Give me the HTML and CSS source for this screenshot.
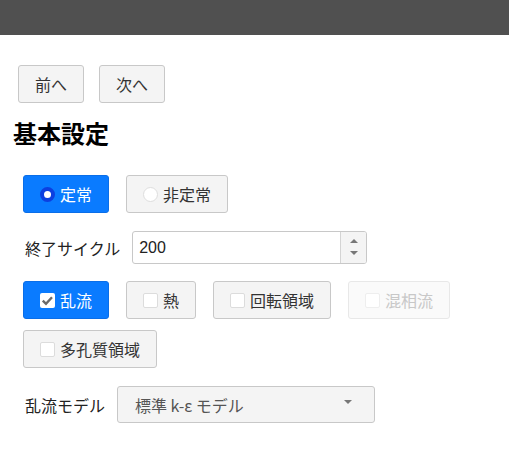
FILE: index.html
```html
<!DOCTYPE html>
<html lang="ja">
<head>
<meta charset="utf-8">
<title>基本設定</title>
<link rel="stylesheet" href="styles.css">
</head>
<body>
<div class="topbar"></div>
<main class="page">
  <div class="nav">
    <button class="btn">前へ</button>
    <button class="btn">次へ</button>
  </div>
  <h2 class="title">基本設定</h2>
  <div class="options radio-row">
    <label class="opt active"><span class="radio on"></span>定常</label>
    <label class="opt"><span class="radio"></span>非定常</label>
  </div>
  <div class="field cycle-row">
    <span class="field-label">終了サイクル</span>
    <div class="number">
      <span class="number-value">200</span>
      <span class="spinner"><span class="arrow-up"></span><span class="arrow-down"></span></span>
    </div>
  </div>
  <div class="options check-row">
    <label class="opt active"><span class="check on"><svg viewBox="0 0 15 15" width="15" height="15"><path d="M2.8 7.6 L6 10.8 L12 4.2" fill="none" stroke="#6a6a6a" stroke-width="2.4"/></svg></span>乱流</label>
    <label class="opt"><span class="check"></span>熱</label>
    <label class="opt"><span class="check"></span>回転領域</label>
    <label class="opt disabled"><span class="check"></span>混相流</label>
    <label class="opt"><span class="check"></span>多孔質領域</label>
  </div>
  <div class="field model-row">
    <span class="field-label">乱流モデル</span>
    <div class="select">標準 k-ε モデル<span class="caret"></span></div>
  </div>
</main>
</body>
</html>
```
FILE: styles.css
```css
* { box-sizing: border-box; }
body {
  margin: 0;
  font-family: "Noto Sans CJK JP", "Liberation Sans", sans-serif;
  color: #222;
  background: #fff;
}
.topbar {
  height: 35px;
  background: #505050;
}
.page {
  padding-left: 13px;
}
.nav {
  display: flex;
  gap: 15px;
  margin: 30px 0 0 5px;
}
.btn {
  height: 38px;
  width: 66px;
  padding: 0;
  border: 1px solid #c8c8c8;
  border-radius: 3px;
  background: #f4f4f4;
  color: #333;
  font-family: inherit;
  font-size: 16px;
}
.title {
  margin: 15px 0 0;
  font-size: 24px;
  line-height: 30px;
  font-weight: bold;
  color: #000;
}
.options {
  display: flex;
  flex-wrap: wrap;
  column-gap: 17px;
  row-gap: 11px;
  margin-left: 10px;
}
.radio-row { margin-top: 27px; }
.check-row { margin-top: 17px; }
.opt {
  height: 38px;
  display: flex;
  align-items: center;
  gap: 5px;
  padding: 0 16px;
  border: 1px solid #c8c8c8;
  border-radius: 3px;
  background: #f4f4f4;
  color: #333;
  font-size: 16px;
}
.opt.active {
  background: #0a7bff;
  border-color: #0a6ee8;
  color: #fff;
}
.opt.disabled {
  background: #fafafa;
  border-color: #e8e8e8;
  color: #c8c8c8;
}
.radio {
  width: 15px;
  height: 15px;
  border-radius: 50%;
  background: #fff;
  border: 1px solid #dedede;
  flex: none;
}
.radio.on {
  border: 4px solid #0c3fe0;
}
.check {
  width: 15px;
  height: 15px;
  background: #fff;
  border: 1px solid #dcdcdc;
  border-radius: 2px;
  flex: none;
  display: flex;
}
.check.on { border: none; }
.opt.disabled .check { border-color: #eeeeee; }
.field {
  display: flex;
  align-items: center;
  gap: 12px;
  margin-left: 12px;
}
.field-label {
  font-size: 16px;
  color: #222;
}
.cycle-row { margin-top: 18px; }
.number {
  width: 235px;
  height: 33px;
  display: flex;
  border: 1px solid #c8c8c8;
  border-radius: 3px;
  overflow: hidden;
}
.number-value {
  flex: 1;
  padding-left: 6px;
  display: flex;
  align-items: center;
  font-family: "Liberation Sans", sans-serif;
  font-size: 16px;
  color: #222;
}
.spinner {
  width: 26px;
  border-left: 1px solid #d4d4d4;
  background: #f4f4f4;
  display: flex;
  flex-direction: column;
  align-items: center;
  justify-content: space-around;
  padding: 3px 0 4px;
}
.arrow-up, .arrow-down {
  width: 0;
  height: 0;
  border-left: 4px solid transparent;
  border-right: 4px solid transparent;
}
.arrow-up { border-bottom: 4px solid #777; }
.arrow-down { border-top: 4px solid #777; }
.model-row { margin-top: 18px; }
.select {
  width: 258px;
  height: 37px;
  display: flex;
  align-items: center;
  padding: 0 0 0 17px;
  border: 1px solid #c8c8c8;
  border-radius: 3px;
  background: #f4f4f4;
  color: #555;
  font-size: 16px;
  position: relative;
}
.caret {
  position: absolute;
  right: 22px;
  top: 13px;
  width: 0;
  height: 0;
  border-left: 4px solid transparent;
  border-right: 4px solid transparent;
  border-top: 4px solid #777;
}
```
